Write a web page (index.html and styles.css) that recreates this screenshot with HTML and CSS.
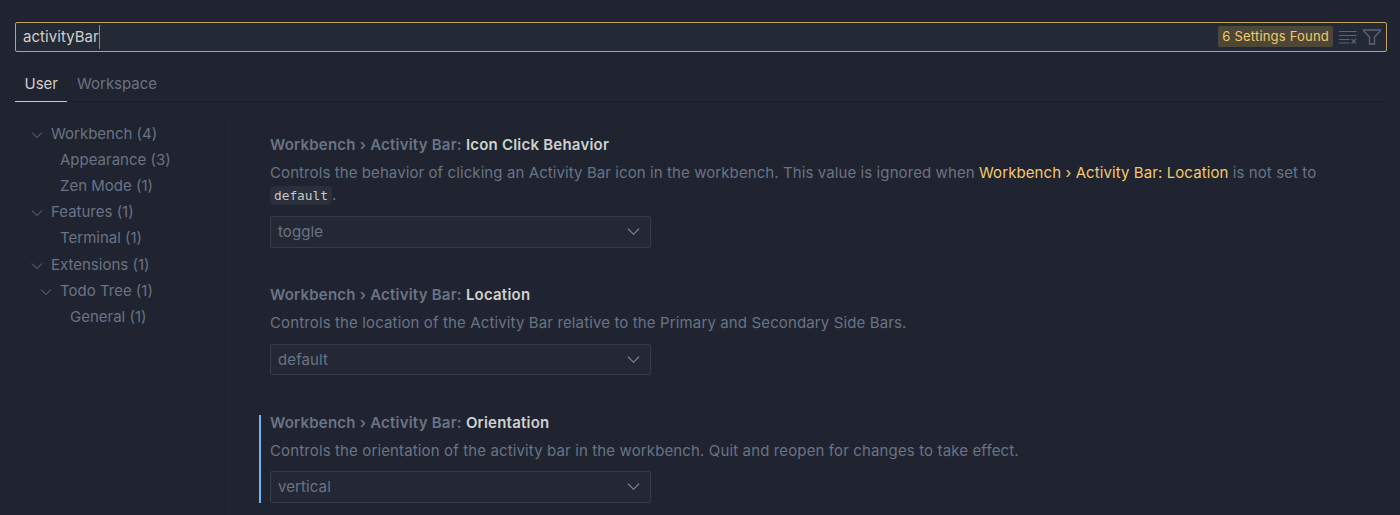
FILE: index.html
```html
<!DOCTYPE html>
<html lang="en">
<head>
    <meta charset="UTF-8">
    <title>Settings</title>
    <link rel="stylesheet" href="styles.css">
</head>
<body>

    <div class="search-box">
        <span class="search-text">activityBar</span>
        <span class="search-cursor"></span>
        <span class="search-count">6 Settings Found</span>
        <svg class="search-icon" width="18" height="14" viewBox="0 0 18 14" fill="none" stroke="#5c6475" stroke-width="1.2">
            <path d="M0 1.500h17.500M0 5.500h17.500M0 9.500h10.500M0 13h10.500"/>
            <path d="M12.500 9l4.500 4.500M17 9l-4.500 4.500"/>
        </svg>
        <svg class="search-icon" width="18" height="16" viewBox="0 0 18 16" fill="none" stroke="#5c6475" stroke-width="1.3">
            <path d="M.7 1h16.600v1l-5.800 6v7h-5V8L.7 2z"/>
        </svg>
    </div>

    <nav class="tabs">
        <span class="tab active">User</span>
        <span class="tab">Workspace</span>
    </nav>

    <main class="content">
        <aside class="tree">
            <div class="tree-row level-1"><svg class="twistie" viewBox="0 0 12 12"><path d="M1 3.500l5 5 5-5"/></svg>Workbench (4)</div>
            <div class="tree-row level-2">Appearance (3)</div>
            <div class="tree-row level-2">Zen Mode (1)</div>
            <div class="tree-row level-1"><svg class="twistie" viewBox="0 0 12 12"><path d="M1 3.500l5 5 5-5"/></svg>Features (1)</div>
            <div class="tree-row level-2">Terminal (1)</div>
            <div class="tree-row level-1"><svg class="twistie" viewBox="0 0 12 12"><path d="M1 3.500l5 5 5-5"/></svg>Extensions (1)</div>
            <div class="tree-row level-2"><svg class="twistie" viewBox="0 0 12 12"><path d="M1 3.500l5 5 5-5"/></svg>Todo Tree (1)</div>
            <div class="tree-row level-3">General (1)</div>
        </aside>

        <section class="settings">
            <div class="setting">
                <div class="setting-title">Workbench › Activity Bar: <strong>Icon Click Behavior</strong></div>
                <p class="setting-desc wrapped">Controls the behavior of clicking an Activity Bar icon in the workbench. This value is ignored when <a class="setting-link">Workbench › Activity Bar: Location</a> is not set to <code>default</code>.</p>
                <div class="select">toggle<svg class="select-arrow" viewBox="0 0 14 14"><path d="M1 4l6 6 6-6"/></svg></div>
            </div>
            <div class="setting">
                <div class="setting-title">Workbench › Activity Bar: <strong>Location</strong></div>
                <p class="setting-desc">Controls the location of the Activity Bar relative to the Primary and Secondary Side Bars.</p>
                <div class="select">default<svg class="select-arrow" viewBox="0 0 14 14"><path d="M1 4l6 6 6-6"/></svg></div>
            </div>
            <div class="setting focused">
                <div class="setting-title">Workbench › Activity Bar: <strong>Orientation</strong></div>
                <p class="setting-desc">Controls the orientation of the activity bar in the workbench. Quit and reopen for changes to take effect.</p>
                <div class="select">vertical<svg class="select-arrow" viewBox="0 0 14 14"><path d="M1 4l6 6 6-6"/></svg></div>
            </div>
        </section>
    </main>

</body>
</html>
```

FILE: styles.css
```css
html, body {
    height: 515px;
    overflow: hidden;
}

body {
    margin: 0;
    padding: 22px 13px 0 15px;
    box-sizing: border-box;
    background-color: #1f2430;
    color: #6b7384;
    font-family: Inter, "Noto Sans", sans-serif;
    font-size: 15px;
}

.search-box {
    display: flex;
    align-items: center;
    height: 30px;
    box-sizing: border-box;
    padding: 0 5px 1px 7px;
    background-color: #242936;
    border: 1px solid #c5a55c;
    border-radius: 2px;
}

.search-text {
    color: #d0d0cc;
    letter-spacing: 0.05px;
}

.search-cursor {
    width: 1px;
    height: 24px;
    background-color: #8a8a88;
    margin-right: auto;
}

.search-count {
    background-color: #4d4738;
    color: #f5c86a;
    font-size: 13px;
    letter-spacing: 0.2px;
    line-height: 21px;
    padding: 0 4px;
    border-radius: 2px;
}

.search-icon {
    margin-left: 6px;
}

.tabs {
    display: flex;
    height: 50px;
    box-sizing: border-box;
    align-items: stretch;
    border-bottom: 1px solid #191d27;
}

.tab {
    display: flex;
    align-items: center;
    padding: 13px 9.500px 0;
    margin-bottom: -1px;
}

.tab.active {
    color: #d0d0cc;
    border-bottom: 1px solid #c8c8c4;
}

.content {
    display: flex;
    padding-top: 18px;
}

.tree {
    width: 210px;
    flex-shrink: 0;
    box-sizing: border-box;
    height: 400px;
    padding-top: 0.600px;
    border-right: 1px solid #1c212b;
}

.tree-row {
    position: relative;
    height: 26.200px;
    line-height: 26.200px;
    white-space: nowrap;
}

.level-1 { padding-left: 36px; }
.level-2 { padding-left: 45px; }
.level-3 { padding-left: 55px; }

.twistie {
    position: absolute;
    top: 8px;
    margin-left: -20px;
    width: 12px;
    height: 12px;
    fill: none;
    stroke: #6b7384;
    stroke-width: 1;
}

.settings {
    flex: 1;
    padding: 1px 0 0 34px;
    min-width: 0;
}

.setting {
    position: relative;
    padding-left: 11px;
    padding-top: 13px;
    margin-bottom: 23.500px;
}

.setting.focused::before {
    content: "";
    position: absolute;
    left: 0;
    top: 16px;
    bottom: 0;
    width: 2px;
    background-color: #6fb4f5;
}

.setting-title {
    font-weight: 600;
    line-height: 22px;
    letter-spacing: 0.22px;
}

.setting-title strong {
    color: #d0d0cc;
    font-weight: 600;
}

.setting-desc {
    margin: 6px 0 9.500px;
    line-height: 22px;
    letter-spacing: 0.13px;
    width: 1060px;
}

.setting-desc.wrapped {
    margin-bottom: 9px;
    letter-spacing: 0.09px;
}

.setting-link {
    color: #f5c86a;
}

code {
    font-family: "DejaVu Sans Mono", "Liberation Mono", monospace;
    font-size: 12.800px;
    letter-spacing: 0;
    color: #c8c8c4;
    background-color: #2a2f3b;
    padding: 2px 4px;
    border-radius: 4px;
}

.select {
    display: flex;
    align-items: center;
    justify-content: space-between;
    width: 381px;
    height: 31.500px;
    box-sizing: border-box;
    padding: 0 10px 0 7px;
    background-color: #232834;
    border: 1px solid #363b48;
    border-radius: 2px;
    letter-spacing: 0.1px;
}

.select-arrow {
    width: 13px;
    height: 13px;
    fill: none;
    stroke: #8a909c;
    stroke-width: 1.200;
}
```
